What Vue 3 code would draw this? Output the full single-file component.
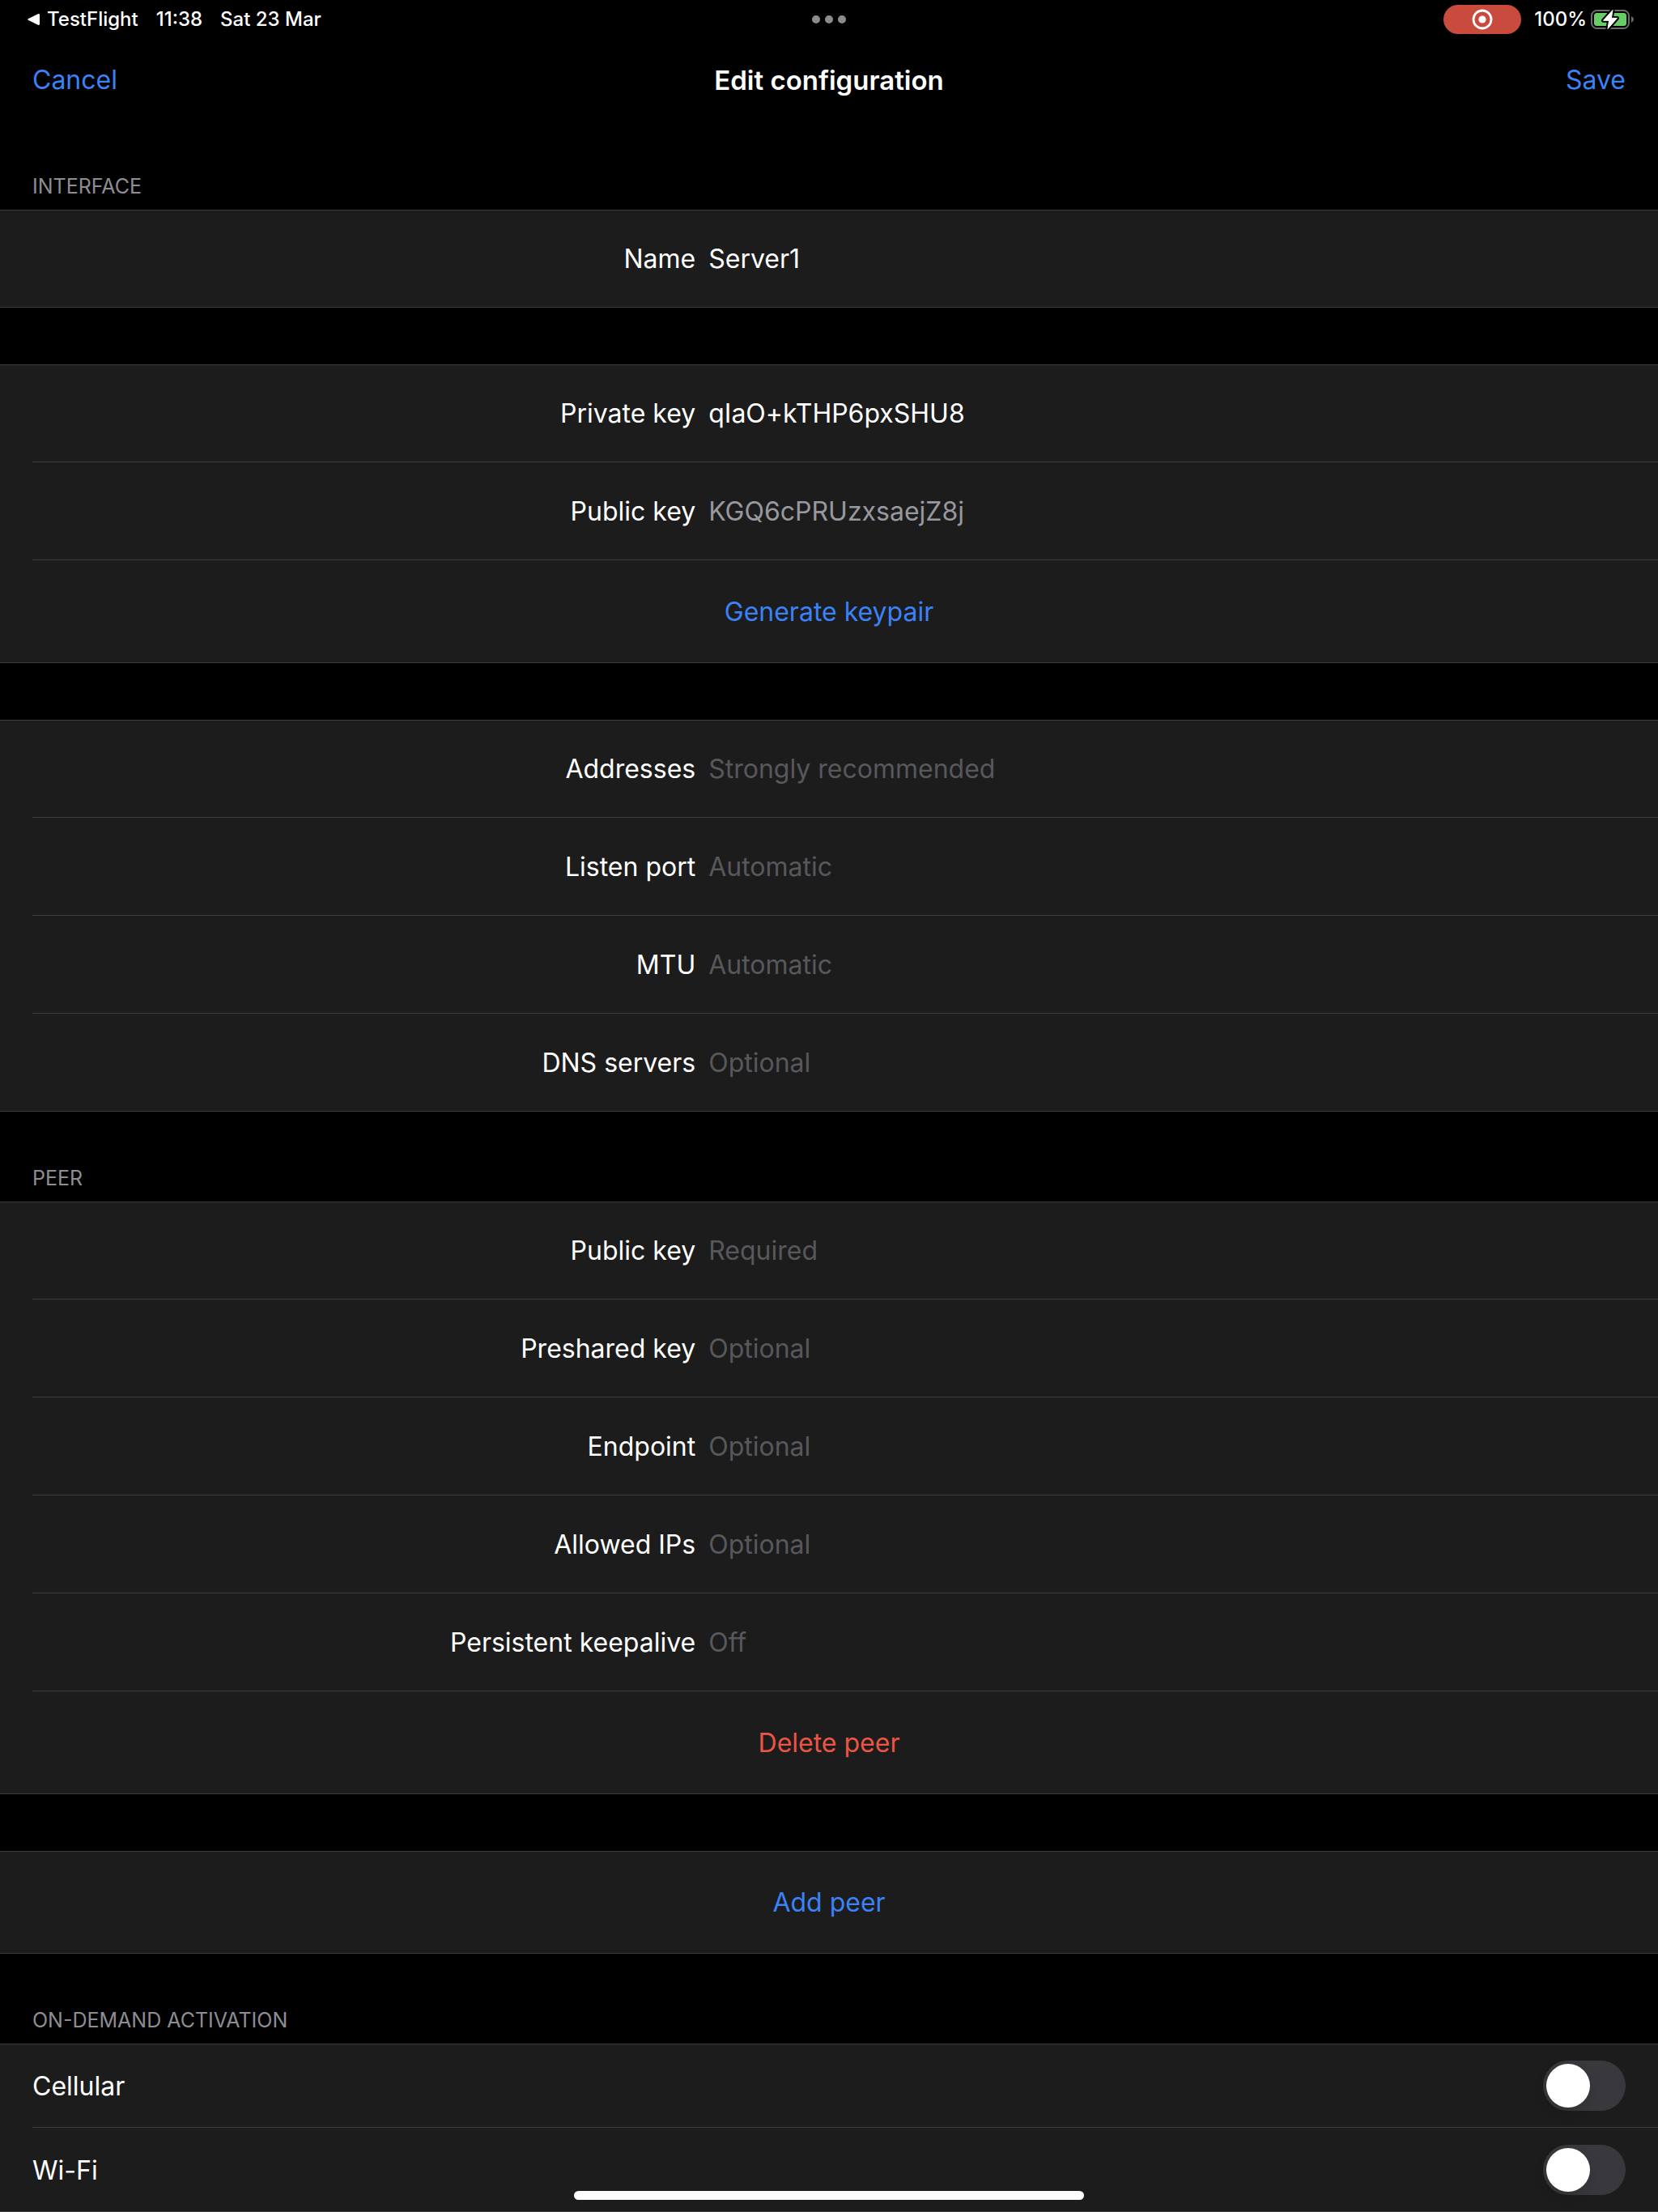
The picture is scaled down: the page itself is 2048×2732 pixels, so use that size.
<script setup>
import { ref } from 'vue'

const sections = ref([
  {
    id: 'name',
    title: 'INTERFACE',
    rows: [{ id: 'name', label: 'Name', value: 'Server1' }],
  },
  {
    id: 'keys',
    rows: [
      { id: 'private-key', label: 'Private key', value: 'qIaO+kTHP6pxSHU8' },
      { id: 'public-key', label: 'Public key', value: 'KGQ6cPRUzxsaejZ8j', readonly: true },
      { id: 'generate', action: 'Generate keypair' },
    ],
  },
  {
    id: 'network',
    rows: [
      { id: 'addresses', label: 'Addresses', value: '', placeholder: 'Strongly recommended' },
      { id: 'listen-port', label: 'Listen port', value: '', placeholder: 'Automatic' },
      { id: 'mtu', label: 'MTU', value: '', placeholder: 'Automatic' },
      { id: 'dns', label: 'DNS servers', value: '', placeholder: 'Optional' },
    ],
  },
  {
    id: 'peer',
    title: 'PEER',
    rows: [
      { id: 'peer-public-key', label: 'Public key', value: '', placeholder: 'Required' },
      { id: 'preshared-key', label: 'Preshared key', value: '', placeholder: 'Optional' },
      { id: 'endpoint', label: 'Endpoint', value: '', placeholder: 'Optional' },
      { id: 'allowed-ips', label: 'Allowed IPs', value: '', placeholder: 'Optional' },
      { id: 'keepalive', label: 'Persistent keepalive', value: '', placeholder: 'Off' },
      { id: 'delete-peer', action: 'Delete peer', destructive: true },
    ],
  },
  {
    id: 'add',
    rows: [{ id: 'add-peer', action: 'Add peer' }],
  },
  {
    id: 'on-demand',
    title: 'ON-DEMAND ACTIVATION',
    rows: [
      { id: 'cellular', toggle: 'Cellular', on: false },
      { id: 'wifi', toggle: 'Wi-Fi', on: false },
    ],
  },
])
</script>

<template>
  <div class="screen">
    <div class="status">
      <div class="status-left">
        <a class="back" href="#">
          <svg width="16" height="16" viewBox="0 0 16 16" aria-hidden="true">
            <path d="M1.2 6.9 13 1.2Q15 .4 15 2.4V13.6Q15 15.6 13 14.8L1.2 9.1Q-.8 8 1.2 6.9Z" fill="#fff" />
          </svg>
          <span>TestFlight</span>
        </a>
        <span>11:38</span>
        <span>Sat 23 Mar</span>
      </div>
      <svg class="dots" width="42" height="10" viewBox="0 0 42 10" aria-hidden="true">
        <circle cx="5" cy="5" r="5" />
        <circle cx="21" cy="5" r="5" />
        <circle cx="37" cy="5" r="5" />
      </svg>
      <div class="status-right">
        <span class="recording">
          <svg width="26" height="26" viewBox="0 0 26 26" aria-hidden="true">
            <circle cx="13" cy="13" r="11" fill="none" stroke="#fff" stroke-width="2.8" />
            <circle cx="13" cy="13" r="4.6" fill="#fff" />
          </svg>
        </span>
        <span>100%</span>
        <svg class="battery" width="54" height="26" viewBox="0 0 54 26" aria-hidden="true">
          <rect x="2" y="2" width="46" height="22" rx="6.5" fill="none" stroke="#6b6b6b" stroke-width="2" />
          <path d="M51 9Q54 10.5 54 13T51 17Z" fill="#6b6b6b" />
          <rect x="5" y="5" width="40" height="16" rx="3.5" fill="#67ce67" />
          <path
            d="M28 1.5 16.5 14.3H23.6L22 24.5 33.5 11.4H26.4Z"
            fill="#000" stroke="#000" stroke-width="5" stroke-linejoin="round"
          />
          <path d="M28 1.5 16.5 14.3H23.6L22 24.5 33.5 11.4H26.4Z" fill="#fff" stroke="#fff" stroke-linejoin="round" />
        </svg>
      </div>
    </div>

    <header class="nav">
      <button type="button" class="nav-button">Cancel</button>
      <h1>Edit configuration</h1>
      <button type="button" class="nav-button save">Save</button>
    </header>

    <main>
      <section v-for="section in sections" :key="section.id" :class="{ titled: section.title }">
        <h2 v-if="section.title">{{ section.title }}</h2>
        <div class="group">
          <template v-for="row in section.rows" :key="row.id">
            <button v-if="row.action" type="button" class="row action" :class="{ destructive: row.destructive }">
              {{ row.action }}
            </button>
            <label v-else-if="row.toggle" class="row toggle">
              <span>{{ row.toggle }}</span>
              <input v-model="row.on" type="checkbox" role="switch" />
            </label>
            <div v-else class="row field">
              <label :for="row.id">{{ row.label }}</label>
              <input
                :id="row.id" v-model="row.value" type="text" :placeholder="row.placeholder"
                :readonly="row.readonly" spellcheck="false" autocomplete="off"
              />
            </div>
          </template>
        </div>
      </section>
    </main>
    <div class="home-indicator"></div>
  </div>
</template>

<style>
body {
  margin: 0;
  background: #000;
}
</style>

<style scoped>
.screen {
  background: #000;
  color: #fff;
  font-family: Inter, "Liberation Sans", sans-serif;
  font-size: 32px;
  line-height: 40px;
}

.screen * {
  box-sizing: border-box;
}

button,
input {
  font: inherit;
  margin: 0;
  padding: 0;
  border: 0;
  background: none;
}

.status {
  display: grid;
  grid-template-columns: 1fr auto 1fr;
  align-items: center;
  height: 48px;
  padding: 0 30px;
  font-size: 24px;
  font-weight: 500;
  line-height: 28px;
}

.status-left,
.status-right,
.back {
  display: flex;
  align-items: center;
}

.status-left {
  gap: 22px;
}

.back {
  gap: 8px;
  padding-left: 4px;
  color: inherit;
  text-decoration: none;
}

.dots {
  fill: #8c8c8c;
}

.status-right {
  justify-content: flex-end;
}

.recording {
  display: flex;
  align-items: center;
  justify-content: center;
  width: 96px;
  height: 36px;
  margin-right: 16px;
  border-radius: 18px;
  background: #c94b3d;
}

.battery {
  margin-left: 4px;
}

.nav {
  display: grid;
  grid-template-columns: 1fr auto 1fr;
  align-items: center;
  height: 100px;
  padding: 2px 40px 0;
}

.nav-button {
  justify-self: start;
  color: #3b82f7;
}

.save {
  justify-self: end;
}

h1 {
  margin: 0;
  font-size: 33px;
  font-weight: 600;
}

section + section:not(.titled) {
  margin-top: 70px;
}

h2 {
  margin: 0;
  padding: 66px 40px 13px;
  color: #8d8d93;
  font-size: 25px;
  font-weight: 400;
  line-height: 32px;
}

.group {
  display: flex;
  flex-direction: column;
  background: #1c1c1c;
  box-shadow: inset 0 1px #3d3d3f;
}

.row {
  min-height: 121px;
  margin-left: 40px;
  border-bottom: 1px solid #3d3d3f;
}

.row:last-child {
  margin-left: 0;
  padding-left: 40px;
}

.field {
  display: grid;
  grid-template-columns: 40vw 1fr;
  align-items: center;
  gap: 16px;
}

.field label {
  padding-top: 2px;
  text-align: right;
}

.field input {
  width: 100%;
  height: 80px;
  color: #fff;
  outline: none;
}

.field input::placeholder {
  color: #58585c;
  opacity: 1;
}

.field input:read-only {
  color: #98989f;
}

.action {
  min-height: 127px;
  padding-top: 2px;
  padding-right: 40px;
  color: #3b82f7;
  text-align: center;
}

.destructive {
  color: #eb5545;
}

.toggle {
  display: flex;
  align-items: center;
  justify-content: space-between;
  min-height: 104px;
  padding-right: 40px;
}

.toggle span {
  padding-top: 2px;
}

.toggle input {
  display: flex;
  width: 102px;
  height: 62px;
  padding: 4px;
  border-radius: 31px;
  background: #39393d;
  appearance: none;
}

.toggle input::before {
  content: "";
  width: 54px;
  height: 54px;
  border-radius: 50%;
  background: #fff;
  box-shadow: 0 6px 16px rgba(0, 0, 0, 0.15);
}

.toggle input:checked {
  justify-content: flex-end;
  background: #67ce67;
}

.home-indicator {
  position: fixed;
  right: 0;
  bottom: 15px;
  left: 0;
  width: 630px;
  height: 11px;
  margin: 0 auto;
  border-radius: 6px;
  background: #fff;
}
</style>
